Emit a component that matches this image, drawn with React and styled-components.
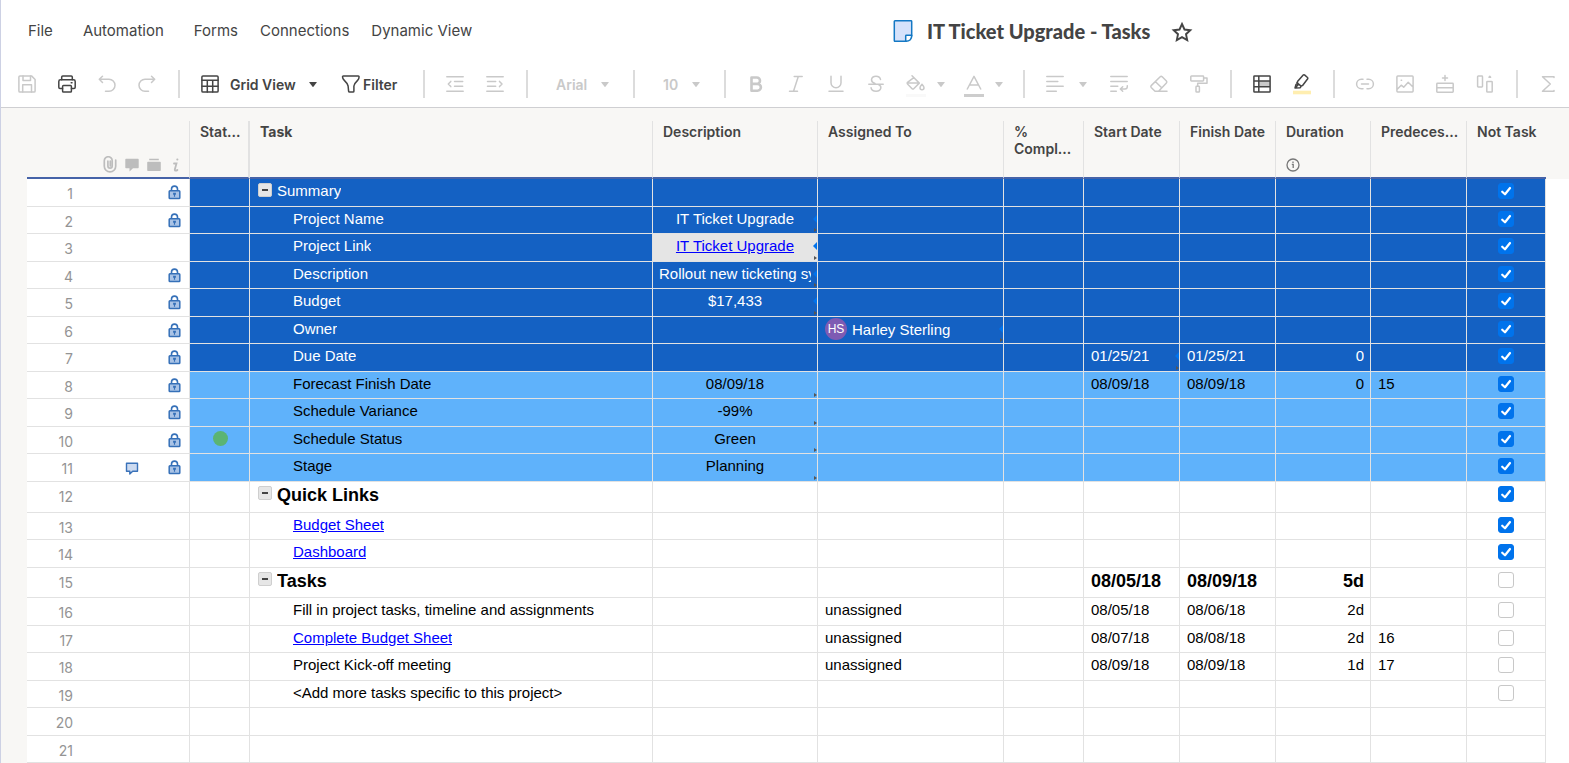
import React from 'react'
import styled, { createGlobalStyle, css } from 'styled-components'

const GlobalStyle = createGlobalStyle`
  *, *::before, *::after { box-sizing: border-box; }

  body {
    margin: 0;
    background: #fff;
    color: #444;
    font-family: Inter, 'Liberation Sans', sans-serif;
  }

  button, select, input { font: inherit; color: inherit; margin: 0; }
`

const Page = styled.div`
  min-height: 100vh;
  border-left: 1px solid #cdd1e4;
  overflow: hidden;
`

/* ---------- title bar ---------- */

const TitleBar = styled.header`
  display: flex;
  align-items: center;
  height: 61px;
  padding-left: 27px;
`

const Menu = styled.nav`
  display: flex;
  gap: 22px;
  margin-right: 44px;
`

const MenuGroup = styled.div`
  display: flex;
  gap: ${p => (p.$wide ? '30px' : '22px')};
`

const MenuItem = styled.button`
  padding: 0;
  border: 0;
  background: none;
  font-size: 15px;
  line-height: 20px;
  white-space: nowrap;
  cursor: pointer;
`

const TitleGroup = styled.div`
  flex: 1;
  display: flex;
  justify-content: center;
  align-items: center;
`

const Title = styled.h1`
  margin: 0 22px 0 14px;
  font-family: Lato, 'Liberation Sans', sans-serif;
  font-size: 20px;
  font-weight: 900;
  line-height: 24px;
  white-space: nowrap;
`

const StarButton = styled.button`
  display: flex;
  padding: 3px 0 0;
  border: 0;
  background: none;
  cursor: pointer;
`

/* ---------- toolbar ---------- */

const Toolbar = styled.div`
  display: flex;
  align-items: center;
  height: 47px;
  padding-left: 6px;
  border-bottom: 1px solid #cfcfd2;
  color: #444;
`

const Divider = styled.span`
  flex: none;
  width: 2px;
  height: 28px;
  margin: 0 10px 0 11px;
  background: #dcdcdc;
`

const ToolButton = styled.button`
  flex: none;
  display: flex;
  align-items: center;
  width: ${p => p.$width || 40}px;
  height: 40px;
  padding: 0 0 0 10px;
  border: 0;
  background: none;
  color: ${p => (p.$active ? '#444' : '#c9c9c9')};
  cursor: pointer;

  svg + svg {
    margin-left: ${p => p.$caretGap || 8}px;
  }
`

const FilterButton = styled.button`
  flex: none;
  display: flex;
  align-items: center;
  gap: 2px;
  width: 71px;
  padding: 0;
  border: 0;
  background: none;
  font-size: 14px;
  font-weight: 600;
  cursor: pointer;
`

const Picker = styled.label`
  flex: none;
  display: flex;
  align-items: center;
  width: ${p => p.$width}px;
  padding-left: ${p => p.$pad}px;
  color: ${p => (p.$active ? '#444' : '#c9c9c9')};
  font-size: 14px;
  font-weight: 600;

  select {
    width: ${p => p.$field}px;
    padding: 0;
    border: 0;
    background: none;
    appearance: none;
  }

  svg + select {
    margin-left: 10px;
  }
`

/* ---------- sheet ---------- */

const SheetArea = styled.main`
  padding: 13px 0 0 26px;
  background: #f8f7f5;
`

const Sheet = styled.table`
  width: 100%;
  table-layout: fixed;
  border-collapse: separate;
  border-spacing: 0;
`

const HeadCell = styled.th`
  position: relative;
  height: 58px;
  padding: 2px 0 0 10px;
  border-right: ${p => (p.$thick ? '2px' : '1px')} solid #e2e2e2;
  border-bottom: 2px solid #4663a8;
  font-size: 14px;
  font-weight: ${p => (p.$primary ? 700 : 600)};
  line-height: 17px;
  text-align: left;
  vertical-align: top;
  white-space: pre-line;

  &:nth-last-child(2) {
    border-right: 0;
  }
`

const HeadGutter = styled(HeadCell)`
  padding: 0;
  vertical-align: bottom;
  color: #bdbdbd;
`

const HeadEdge = styled.td`
  padding: 0;
`

const InfoMark = styled.span`
  position: absolute;
  left: 10px;
  bottom: 5px;
  display: flex;
  color: #777;
`

const GutterGrid = styled.div`
  display: grid;
  grid-template-columns: 46px 26px repeat(4, 22px);
  justify-items: center;
  align-items: center;
  height: ${p => (p.$head ? '24px' : 'auto')};
`

const RowNumber = styled.span`
  justify-self: end;
  color: #949494;
  font-size: 14px;
  line-height: 18px;
`

const LockSlot = styled.span`
  display: flex;
  align-self: start;
  margin-right: 3px;
`

const Cell = styled.td`
  position: relative;
  height: inherit;
  padding: ${p => (p.$align === 'center' ? '3px 6px 0' : '3px 6px 0 7px')};
  border-right: 1px solid #e2e2e2;
  border-bottom: 1px solid #e2e2e2;
  background: #fff;
  text-align: ${p => p.$align || 'left'};
  vertical-align: top;

  ${p =>
    p.$linked &&
    css`
      background: #e5e5e5 !important;
    `}
`

const GutterCell = styled(Cell)`
  padding: 6px 0 0;
`

const EdgeCell = styled.td`
  padding: 0;
  background: #fff;
`

const Row = styled.tr`
  height: ${p => (p.$heading ? '31px' : '28px')};
  color: #000;
  font-family: 'Liberation Sans', Arial, sans-serif;
  font-size: 15px;
  line-height: 17px;

  &:nth-child(even) {
    height: ${p => (p.$heading ? '30px' : '27px')};
  }

  ${p =>
    p.$tone === 'dark' &&
    css`
      color: #fff;
      ${Cell}:not(${GutterCell}) { background: #1461c3; }
    `}

  ${p =>
    p.$tone === 'light' &&
    css`
      ${Cell}:not(${GutterCell}) { background: #5fb2fb; }
    `}

  ${p =>
    p.$heading &&
    css`
      font-size: 18px;
      font-weight: 700;
      line-height: 20px;
    `}

  ${GutterCell} {
    font-family: Inter, 'Liberation Sans', sans-serif;
    font-weight: 400;
  }
`

const CellText = styled.div`
  overflow: hidden;
  white-space: nowrap;

  a {
    color: #00f;
    text-decoration: underline;
  }
`

const TaskContent = styled.div`
  display: flex;
  align-items: flex-start;
  gap: 5px;
  padding-left: ${p => (p.$parent ? '1px' : '36px')};
`

const Toggle = styled.button`
  flex: none;
  display: grid;
  place-items: center;
  width: 14px;
  height: 14px;
  margin-top: 1px;
  padding: 0;
  border: 1px solid #cfcfcf;
  border-radius: 2px;
  background: #e6e6e6;
  cursor: pointer;

  &::before {
    content: '';
    width: 6px;
    height: 2px;
    background: #444;
  }
`

const StatusDot = styled.span`
  display: block;
  width: 15px;
  height: 15px;
  margin: 1px auto 0;
  border-radius: 50%;
  background: #5bb473;
`

const Person = styled.div`
  display: flex;
  align-items: center;
  gap: 5px;
  height: 18px;
`

const Avatar = styled.span`
  flex: none;
  display: grid;
  place-items: center;
  width: 22px;
  height: 22px;
  border-radius: 50%;
  background: #7e5bb3;
  color: #fff;
  font-size: 12px;
`

const CheckBox = styled.label`
  display: inline-grid;
  margin-top: 1px;
  vertical-align: top;

  input,
  svg {
    grid-area: 1 / 1;
    width: 16px;
    height: 16px;
  }

  input {
    appearance: none;
    border: 1px solid #c8c8c8;
    border-radius: 3px;
    background: #fff;
  }

  input:checked {
    border-color: #0073ec;
    background: #0073ec;
  }

  svg {
    display: none;
    pointer-events: none;
  }

  input:checked + svg {
    display: block;
  }
`

const LinkMarker = styled.i`
  position: absolute;
  right: 0;
  top: 8px;
  border: solid transparent;
  border-width: 4px 4px 4px 0;
  border-right-color: #0073ec;
`

const FormulaMarker = styled.i`
  position: absolute;
  right: 0;
  bottom: 1px;
  border: solid transparent;
  border-width: 2px 0 2px 3px;
  border-left-color: #555;
`

/* ---------- icons ---------- */

const Icon = ({ size = 20, children, ...rest }) => (
  <svg
    width={size}
    height={size}
    viewBox='0 0 20 20'
    fill='none'
    stroke='currentColor'
    strokeWidth='1.5'
    strokeLinecap='round'
    strokeLinejoin='round'
    overflow='visible'
    aria-hidden='true'
    {...rest}
  >
    {children}
  </svg>
)

const Caret = () => (
  <svg width='8' height='5' viewBox='0 0 8 5' fill='currentColor' aria-hidden='true'>
    <path d='M.6 0h6.8q.6 0 .3.5L4.4 4.7q-.4.4-.8 0L.3.5Q0 0 .6 0z' />
  </svg>
)

const icons = {
  save: (
    <>
      <path d='M3 1.9h11.5L18.1 5.500V17q0 1.100-1.100 1.100H3q-1.100 0-1.100-1.100V3q0-1.100 1.100-1.100z' />
      <path d='M6 2v4.500h7.500V2M5.700 18v-7.300h8.800V18' />
    </>
  ),
  print: (
    <>
      <path d='M4.700 5.800V3q0-1.100 1.100-1.100h8.400q1.100 0 1.100 1.100v2.800' />
      <path d='M5.500 14.500H3q-1.200 0-1.200-1.200V7.500q0-1.700 1.700-1.700h13q1.700 0 1.700 1.700v5.800q0 1.200-1.200 1.200h-2.500' />
      <path d='M6.500 11.500h7q.9 0 .9.900v4.800q0 .9-.9.9h-7q-.9 0-.9-.9v-4.800q0-.9.900-.9zM14.200 8.800h.8' />
    </>
  ),
  undo: <path d='M5.500 2.300L2.300 5.300l3.200 3.200M2.500 5.300H12a6 6 0 0 1 0 12H8.500' />,
  redo: <path d='M14.500 2.300l3.200 3-3.200 3.200M17.500 5.300H8a6 6 0 0 0 0 12h3.500' />,
  grid: (
    <>
      <path d='M3 1.900h14q1.100 0 1.100 1.100v14q0 1.100-1.100 1.100H3q-1.100 0-1.100-1.100V3q0-1.100 1.100-1.100z' />
      <path d='M2 6.300h16M2 12.200h16M7.300 6.300V18M12.700 6.300V18' />
    </>
  ),
  filter: <path d='M2.300 2h15q.8 0 .8.800 0 2.200-1.500 3.600-3.300 3.200-3.700 5.600v5.200q0 .9-.9.900H8.600q-.9 0-1-.9L7.100 12q-.6-2.600-3.800-5.600Q1.500 4.700 1.500 2.800q0-.8.8-.8z' />,
  outdent: <path d='M1.800 2.700h16.400M9.500 7.600h8.200M9.500 12.300h8.200M1.800 17.300h16.400M5.800 7.400L3.300 10l2.500 2.600' />,
  indent: <path d='M1.800 2.700h16.400M2.500 7.600h8.200M2.500 12.300h8.200M1.800 17.300h16.400M14.500 7.400L17 10l-2.500 2.600' />,
  bold: <path d='M5.500 3.500h5.300a3.200 3.200 0 0 1 0 6.400H5.500zM5.500 9.900h6a3.400 3.400 0 0 1 0 6.800h-6z' strokeWidth='2.600' />,
  italic: <path d='M8.200 2.500h8M3.500 17.200h8M12.300 2.500L7.500 17.200' />,
  underline: <path d='M5 2.200v6.600a5 5 0 0 0 10 0V2.200M3 17.200h14' />,
  strike: <path d='M14.500 5.500Q14 2.300 10 2.300T5.500 5.800q0 2.600 3.500 3.600M2.800 10.200h14.400M12.800 10.800q2.400 1 2 3.400-.5 3-4.700 3-4.500 0-5-3.400' />,
  fill: (
    <>
      <path d='M6 1.800l7.300 7.300-5.600 5.600q-.8.8-1.600 0L1.500 10q-.8-.8 0-1.600L7.800 3.600M2 9h11' />
      <path d='M16 10.300q2 2.300 2 3.400a2 2 0 0 1-4 0q0-1.100 2-3.400z' />
      <path d='M0 21.500h20' strokeWidth='3' strokeLinecap='butt' stroke='#f9f9f9' />
    </>
  ),
  fontColor: (
    <>
      <path d='M3.300 15L10 2.300 16.700 15M6 10.900h8' />
      <path d='M0 21.500h20' strokeWidth='3' strokeLinecap='butt' stroke='#cdcdcd' />
    </>
  ),
  align: <path d='M1.800 2.500h16.400M1.800 7.400h11M1.800 12.300h16.400M1.800 17.200h9.500' />,
  wrap: <path d='M1.800 2.500h16.400M1.800 7.400h16.400M1.800 12.300h7M1.800 17.200h5.500M18.300 11.800q.2 3.200-2.300 3.200h-4.500M13.700 12.800L11.300 15l2.400 2.300' />,
  eraser: <path d='M11.200 2.800q1-.9 2 0l4.200 4.300q.9 1 0 1.900l-7.800 8.300H6l-3.800-3.900q-.8-.9 0-1.800zM6.500 7.800l6.200 6M6 17.300h12' />,
  roller: <path d='M2.500 2h11.400q.7 0 .7.700v3.600q0 .7-.7.700H2.500q-.7 0-.7-.7V2.700q0-.7.7-.7zM14.800 4h3.200v5.300H8.700v2.900M7.700 12.300h2q.7 0 .7.700v4.400q0 .7-.7.700h-2q-.7 0-.7-.7V13q0-.7.7-.7z' />,
  gridlines: (
    <>
      <path d='M7 7h11v5.500H7z' fill='#c9c9c9' stroke='none' />
      <path d='M2.500 2h15q.6 0 .6.600v14.800q0 .6-.6.600h-15q-.6 0-.6-.6V2.600q0-.6.600-.6zM2 7h16M2 12.700h16M6.800 2v16' />
    </>
  ),
  highlight: (
    <>
      <path d='M1 18.500h18' strokeWidth='3.600' strokeLinecap='butt' stroke='#ffeeb0' />
      <path d='M5.500 7.500l5.700-6.500q.6-.6 1.300-.1l3 2.600q.6.600.2 1.300l-5.100 6.700-1.300.4-1 1.800-5.300.3 1-3.600 1.500-.6zM4.800 8.700l4 3.200M3.500 13.500l3-3' />
    </>
  ),
  link: <path d='M8 5.300H6.300a4.700 4.700 0 0 0 0 9.400H8M12 5.300h1.700a4.700 4.700 0 0 1 0 9.400H12M6.500 10h7' />,
  image: <path d='M2.800 2h14.400q.9 0 .9.900v14.200q0 .9-.9.900H2.800q-.9 0-.9-.9V2.900q0-.9.900-.9zM2 15.500l4.200-4.300 2.500 2 4.500-5 5 5M6.200 6.200h.4' />,
  addRow: <path d='M2.500 9.200h15q.7 0 .7.700v7.600q0 .7-.7.700h-15q-.7 0-.7-.7V9.900q0-.7.700-.7zM2 13.700h16M10 1.500v5M7.500 4h5' />,
  columns: <path d='M3.300 2h3.500q.7 0 .7.700v9.500q0 .7-.7.700H3.300q-.7 0-.7-.7V2.700q0-.7.700-.7zM12.500 7.400h4q.7 0 .7.700v9.300q0 .7-.7.700h-4q-.7 0-.7-.7V8.100q0-.7.700-.7zM14 3.200l.8-.8.8.8z' />,
  sum: <path d='M16 3.500V2.700H4.500L12.300 10l-7.800 7.300H16v-.8' />,
}

const Tool = ({ name, label, caret, ...rest }) => (
  <ToolButton type='button' aria-label={label} {...rest}>
    <Icon>{icons[name]}</Icon>
    {caret && <Caret />}
  </ToolButton>
)

const SheetIcon = () => (
  <svg width='20' height='24' viewBox='0 0 20 24' fill='#d6e2fb' stroke='#1478c4' strokeWidth='1.500' strokeLinejoin='round' aria-hidden='true'>
    <path d='M2 1.800h16q.7 0 .7.700V17l-5.500 5.300H2q-.7 0-.7-.7V2.500q0-.7.700-.7z' />
    <path d='M12.700 22.300V17q0-.7.700-.7h5.300q.2 5.800-6 6z' fill='#fff' />
  </svg>
)

const Lock = () => (
  <svg width='13' height='15' viewBox='0 0 13 15' aria-hidden='true'>
    <path d='M3.500 6V4.100a3 3 0 0 1 6 0V6' fill='none' stroke='#3570b8' strokeWidth='1.600' />
    <rect x='1.200' y='5.800' width='10.600' height='7.800' rx='.8' fill='#a9c3e6' stroke='#3570b8' strokeWidth='1.500' />
    <path d='M5.100 7.700h2.800v2H7.100v2.100H5.900V9.700h-.8z' fill='#3570b8' />
  </svg>
)

const Comment = () => (
  <svg width='14' height='14' viewBox='0 0 14 14' fill='#ccdaf0' stroke='#3a72b9' strokeWidth='1.400' strokeLinejoin='round' aria-hidden='true'>
    <path d='M1.500 1.200h11v8H7.700l-2.900 2.800V9.200H1.500z' />
  </svg>
)

const GutterIcons = () => (
  <>
    <svg width='14' height='18' viewBox='0 0 14 18' fill='none' stroke='currentColor' strokeWidth='1.700' strokeLinecap='round' aria-hidden='true'>
      <path d='M12.700 4v6.200a5.600 5.600 0 0 1-11.400 0V4.700a3.900 3.900 0 0 1 7.900 0V10a2.100 2.100 0 0 1-4.300 0V5.200M7.300 5.200V10' />
    </svg>
    <svg width='14' height='14' viewBox='0 0 14 14' fill='currentColor' aria-hidden='true'>
      <path d='M1 .8h12q.7 0 .7.700v8q0 .7-.7.700H8L4.500 13.500v-3.300H1q-.7 0-.7-.7v-8Q.3.800 1 .8z' />
    </svg>
    <svg width='14' height='14' viewBox='0 0 14 14' fill='currentColor' aria-hidden='true'>
      <path d='M2.200.8h9.600v1.500H2.200zM1 3.800h12q.8 0 .8.800v7.600q0 .8-.8.800H1q-.8 0-.8-.8V4.600q0-.8.8-.8z' />
    </svg>
    <svg width='8' height='14' viewBox='0 0 8 14' fill='none' stroke='currentColor' strokeWidth='1.800' strokeLinecap='round' aria-hidden='true'>
      <path d='M2 5.500h2.500L2.800 11.500q-.2 1.200 1 1.200.9 0 1.600-.7M5.200 1.500h.3' />
    </svg>
  </>
)

/* ---------- data ---------- */

const columns = [
  { label: 'Stat...', width: 60, thick: true },
  { label: 'Task', primary: true },
  { label: 'Description', width: 165 },
  { label: 'Assigned To', width: 186 },
  { label: '%\nCompl...', width: 80 },
  { label: 'Start Date', width: 96 },
  { label: 'Finish Date', width: 96 },
  { label: 'Duration', width: 95, info: true },
  { label: 'Predeces...', width: 96 },
  { label: 'Not Task', width: 79 },
]

const projectRows = [
  { task: 'Summary', parent: true },
  { task: 'Project Name', desc: 'IT Ticket Upgrade', linkIn: 'desc' },
  { task: 'Project Link', desc: 'IT Ticket Upgrade', descLink: true, linkIn: 'desc', unlocked: true },
  { task: 'Description', desc: 'Rollout new ticketing system', linkIn: 'desc' },
  { task: 'Budget', desc: '$17,433', linkIn: 'desc' },
  { task: 'Owner', person: 'Harley Sterling', initials: 'HS', linkIn: 'assigned' },
  { task: 'Due Date', start: '01/25/21', finish: '01/25/21', duration: '0', linkIn: 'start' },
  { task: 'Forecast Finish Date', desc: '08/09/18', start: '08/09/18', finish: '08/09/18', duration: '0', pred: '15' },
  { task: 'Schedule Variance', desc: '-99%' },
  { task: 'Schedule Status', desc: 'Green', status: true },
  { task: 'Stage', desc: 'Planning', comment: true },
].map((row, i) => ({
  ...row,
  tone: i < 7 ? 'dark' : 'light',
  formulaIn: i < 7 ? row.linkIn : 'desc',
  locked: !row.unlocked,
  checked: true,
}))

const taskRows = [
  { task: 'Quick Links', parent: true, heading: true, checked: true },
  { task: 'Budget Sheet', taskLink: true, checked: true },
  { task: 'Dashboard', taskLink: true, checked: true },
  { task: 'Tasks', parent: true, heading: true, start: '08/05/18', finish: '08/09/18', duration: '5d', checked: false },
  { task: 'Fill in project tasks, timeline and assignments', person: 'unassigned', start: '08/05/18', finish: '08/06/18', duration: '2d', checked: false },
  { task: 'Complete Budget Sheet', taskLink: true, person: 'unassigned', start: '08/07/18', finish: '08/08/18', duration: '2d', pred: '16', checked: false },
  { task: 'Project Kick-off meeting', person: 'unassigned', start: '08/09/18', finish: '08/09/18', duration: '1d', pred: '17', checked: false },
  { task: '<Add more tasks specific to this project>', checked: false },
  {},
  {},
]

/* ---------- rows ---------- */

const Value = ({ text, link }) => (
  <CellText>{link ? <a href='#sheet'>{text}</a> : text}</CellText>
)

const SheetRow = ({ row, number }) => {
  const markers = key => (
    <>
      {row.linkIn === key && <LinkMarker />}
      {row.formulaIn === key && <FormulaMarker />}
    </>
  )

  return (
    <Row $tone={row.tone} $heading={row.heading}>
      <GutterCell>
        <GutterGrid>
          <RowNumber>{number}</RowNumber>
          <span />
          <span />
          {row.comment ? <Comment /> : <span />}
          <span />
          {row.locked && (
            <LockSlot>
              <Lock />
            </LockSlot>
          )}
        </GutterGrid>
      </GutterCell>
      <Cell>{row.status && <StatusDot role='img' aria-label='Green' />}</Cell>
      <Cell>
        {row.task && (
          <TaskContent $parent={row.parent}>
            {row.parent && <Toggle type='button' aria-label={`Collapse ${row.task}`} />}
            <Value text={row.task} link={row.taskLink} />
          </TaskContent>
        )}
      </Cell>
      <Cell $align='center' $linked={row.descLink}>
        <Value text={row.desc} link={row.descLink} />
        {markers('desc')}
      </Cell>
      <Cell>
        {row.initials ? (
          <Person>
            <Avatar>{row.initials}</Avatar>
            <CellText>{row.person}</CellText>
          </Person>
        ) : (
          <Value text={row.person} />
        )}
        {markers('assigned')}
      </Cell>
      <Cell />
      <Cell>
        <Value text={row.start} />
        {markers('start')}
      </Cell>
      <Cell>
        <Value text={row.finish} />
      </Cell>
      <Cell $align='right'>
        <Value text={row.duration} />
      </Cell>
      <Cell>
        <Value text={row.pred} />
      </Cell>
      <Cell $align='center'>
        {row.checked !== undefined && (
          <CheckBox>
            <input type='checkbox' defaultChecked={row.checked} aria-label={`Not Task, row ${number}`} />
            <svg viewBox='0 0 16 16' fill='none' stroke='#fff' strokeWidth='2.200' strokeLinecap='round' strokeLinejoin='round' aria-hidden='true'>
              <path d='M4.200 8.700l2.800 2.600L12 5' />
            </svg>
          </CheckBox>
        )}
      </Cell>
      <EdgeCell />
    </Row>
  )
}

const App = () => (
  <Page>
    <GlobalStyle />

    <TitleBar>
      <Menu>
        <MenuGroup $wide>
          <MenuItem type='button'>File</MenuItem>
          <MenuItem type='button'>Automation</MenuItem>
          <MenuItem type='button'>Forms</MenuItem>
        </MenuGroup>
        <MenuGroup>
          <MenuItem type='button'>Connections</MenuItem>
          <MenuItem type='button'>Dynamic View</MenuItem>
        </MenuGroup>
      </Menu>
      <TitleGroup>
        <SheetIcon />
        <Title>IT Ticket Upgrade - Tasks</Title>
        <StarButton type='button' aria-label='Favorite'>
          <Icon strokeLinejoin='miter' strokeWidth='1.900'>
            <path d='M10 2l2.500 5.500 5.800.7-4.300 4 1.200 5.900L10 15.200l-5.200 2.900L6 12.200l-4.300-4 5.800-.7z' />
          </Icon>
        </StarButton>
      </TitleGroup>
    </TitleBar>

    <Toolbar role='toolbar'>
      <Tool name='save' label='Save' />
      <Tool name='print' label='Print' $active />
      <Tool name='undo' label='Undo' />
      <Tool name='redo' label='Redo' />
      <Divider />
      <Picker $active $width={151} $pad={10} $field={79}>
        <Icon>{icons.grid}</Icon>
        <select aria-label='View'>
          <option>Grid View</option>
        </select>
        <Caret />
      </Picker>
      <FilterButton type='button'>
        <Icon>{icons.filter}</Icon>
        Filter
      </FilterButton>
      <Divider />
      <Tool name='outdent' label='Outdent' />
      <Tool name='indent' label='Indent' />
      <Divider />
      <Picker $width={84} $pad={18} $field={45}>
        <select aria-label='Font'>
          <option>Arial</option>
        </select>
        <Caret />
      </Picker>
      <Divider />
      <Picker $width={68} $pad={18} $field={29}>
        <select aria-label='Font size'>
          <option>10</option>
        </select>
        <Caret />
      </Picker>
      <Divider />
      <Tool name='bold' label='Bold' />
      <Tool name='italic' label='Italic' />
      <Tool name='underline' label='Underline' />
      <Tool name='strike' label='Strikethrough' />
      <Tool name='fill' label='Background color' caret $width={58} $caretGap={11} />
      <Tool name='fontColor' label='Text color' caret $width={58} $caretGap={11} />
      <Divider />
      <Tool name='align' label='Align' caret $width={64} $caretGap={14} />
      <Tool name='wrap' label='Wrap text' />
      <Tool name='eraser' label='Clear format' />
      <Tool name='roller' label='Format painter' />
      <Divider />
      <Tool name='gridlines' label='Conditional formatting' $active />
      <Tool name='highlight' label='Highlight changes' $active />
      <Divider />
      <Tool name='link' label='Link' />
      <Tool name='image' label='Image' />
      <Tool name='addRow' label='Insert row' />
      <Tool name='columns' label='Card view' />
      <Divider />
      <Tool name='sum' label='Sum' />
    </Toolbar>

    <SheetArea id='sheet'>
      <Sheet>
        <colgroup>
          <col width='163' />
          {columns.map(col => (
            <col key={col.label} width={col.width} />
          ))}
          <col width='23' />
        </colgroup>
        <thead>
          <tr>
            <HeadGutter aria-label='Row'>
              <GutterGrid $head>
                <span />
                <span />
                <GutterIcons />
              </GutterGrid>
            </HeadGutter>
            {columns.map(col => (
              <HeadCell key={col.label} $primary={col.primary} $thick={col.thick}>
                {col.label}
                {col.info && (
                  <InfoMark>
                    <svg width='14' height='14' viewBox='0 0 14 14' fill='none' stroke='currentColor' strokeWidth='1.300' aria-hidden='true'>
                      <circle cx='7' cy='7' r='6' />
                      <path d='M5.800 6.300h1.400V10M7 3.600v1.300' />
                    </svg>
                  </InfoMark>
                )}
              </HeadCell>
            ))}
            <HeadEdge />
          </tr>
        </thead>
        <tbody>
          {projectRows.map((row, i) => (
            <SheetRow key={i} row={row} number={i + 1} />
          ))}
        </tbody>
        <tbody>
          {taskRows.map((row, i) => (
            <SheetRow key={i} row={row} number={projectRows.length + i + 1} />
          ))}
        </tbody>
      </Sheet>
    </SheetArea>
  </Page>
)

export default App
